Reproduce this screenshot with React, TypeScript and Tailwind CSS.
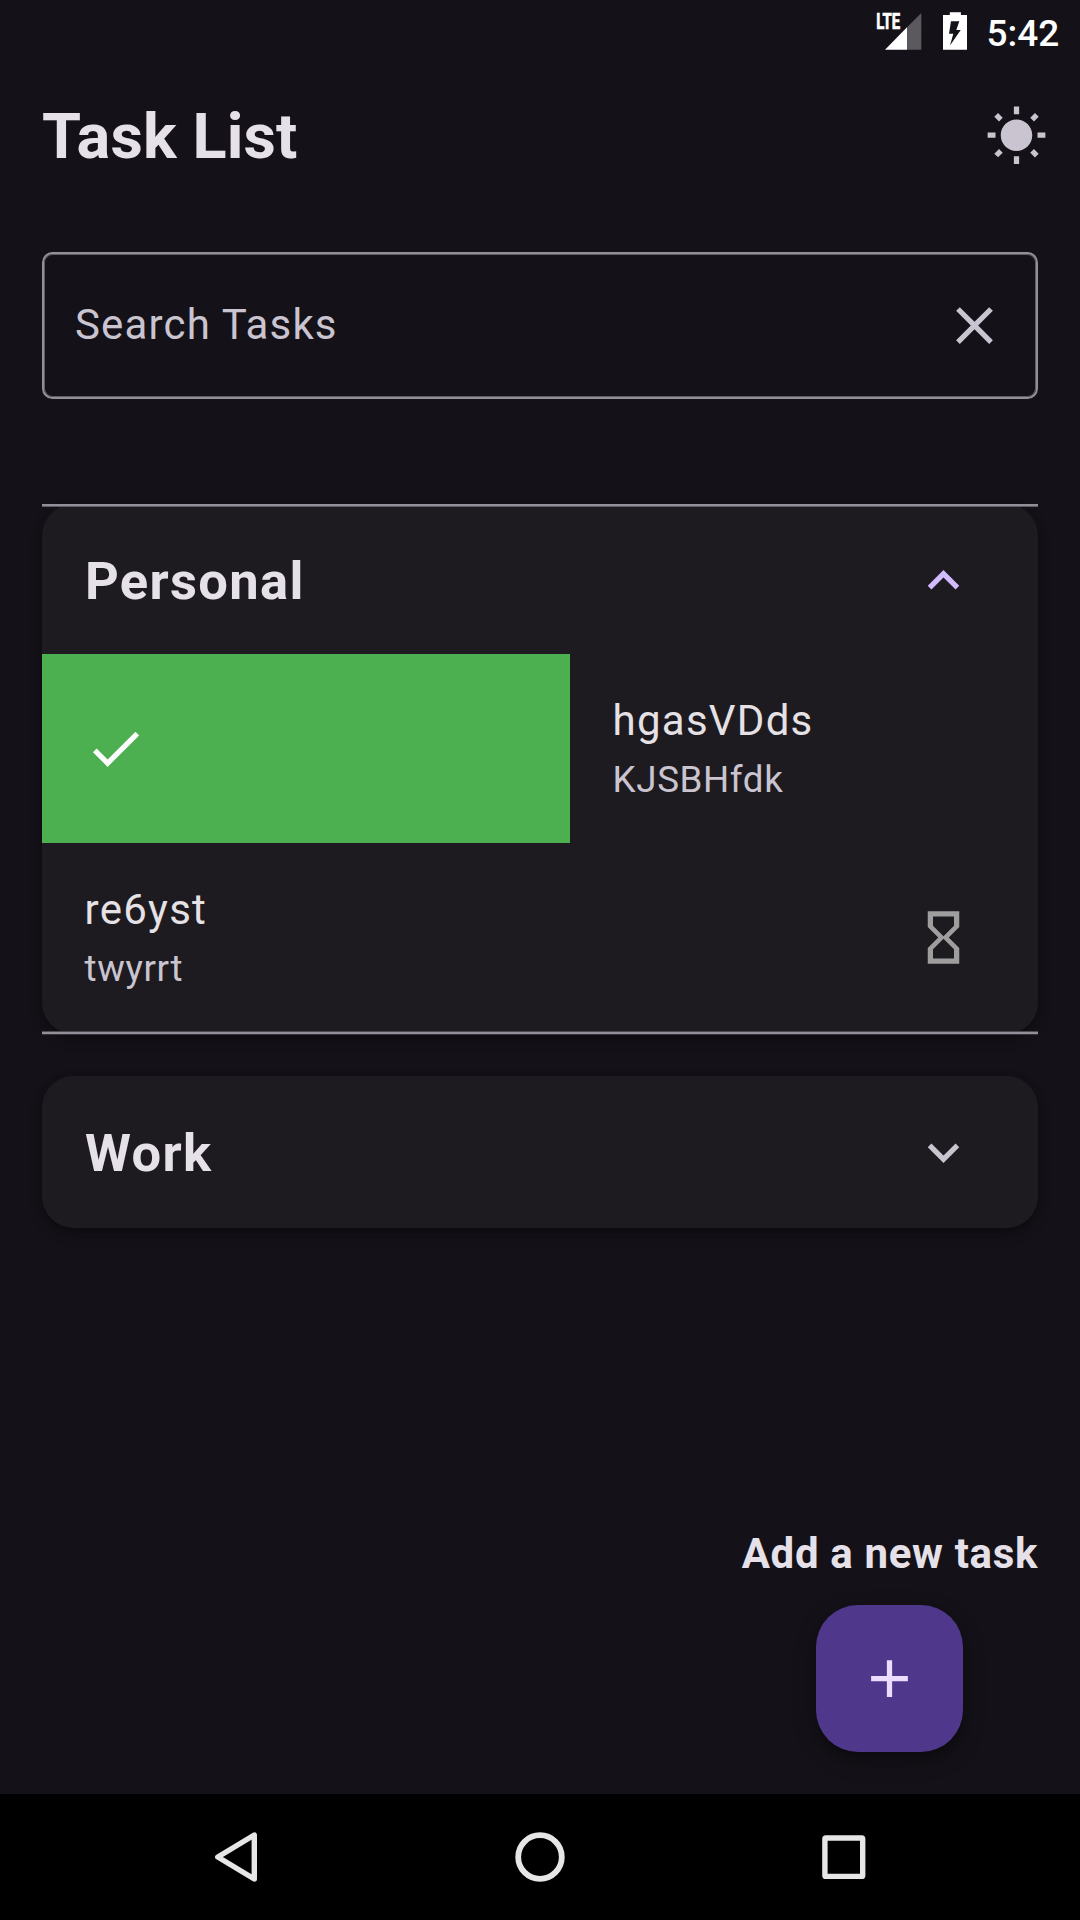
import type { ReactNode } from "react";

const paths = {
  sun: "M6.76 4.84l-1.8-1.79-1.41 1.41 1.79 1.79 1.42-1.41zM4 10.5H1v2h3v-2zm9-9.95h-2V3.5h2V.55zm7.45 3.91l-1.41-1.41-1.79 1.79 1.41 1.41 1.79-1.79zm-3.21 13.7l1.79 1.8 1.41-1.41-1.8-1.79-1.4 1.4zM20 10.5v2h3v-2h-3zm-8-5c-3.31 0-6 2.69-6 6s2.69 6 6 6 6-2.69 6-6-2.69-6-6-6zm-1 16.95h2V19.5h-2v2.95zm-7.45-3.91l1.41 1.41 1.79-1.8-1.41-1.41-1.79 1.8z",
  close: "M19 6.41L17.59 5 12 10.59 6.41 5 5 6.41 10.59 12 5 17.59 6.41 19 12 13.41 17.59 19 19 17.59 13.41 12z",
  less: "M12 8l-6 6 1.41 1.41L12 10.83l4.59 4.58L18 14z",
  more: "M16.59 8.59L12 13.17 7.41 8.59 6 10l6 6 6-6z",
  check: "M9 16.17L4.83 12l-1.42 1.41L9 19 21 7l-1.41-1.41z",
  hourglass: "M6 2v6h.01L6 8.01 10 12l-4 4 .01.01H6V22h12v-5.99h-.01L18 16l-4-4 4-3.99-.01-.01H18V2H6zm10 14.5V20H8v-3.5l4-4 4 4zm-4-5l-4-4V4h8v3.5l-4 4z",
  add: "M19 13h-6v6h-2v-6H5v-2h6V5h2v6h6v2z",
};

function Icon({ name, className }: { name: keyof typeof paths; className: string }) {
  return (
    <svg viewBox="0 0 24 24" fill="currentColor" className={`size-[63px] shrink-0 ${className}`}>
      <path d={paths[name]} />
    </svg>
  );
}

function StatusBar() {
  return (
    <div className="flex h-[63px] justify-end pr-[21px]">
      <svg viewBox="0 0 96 63" className="h-[63px] w-24">
        <text x="1.2" y="29" fill="#fff" stroke="#fff" strokeWidth="0.7" fontFamily="Roboto" fontWeight="700" fontSize="21.5" textLength="24" lengthAdjust="spacingAndGlyphs">
          LTE
        </text>
        <path d="M10 49.7L32 27.3V49.7z" fill="#fff" />
        <path d="M32 27.3L46.3 13V49.7H32z" fill="#5b595e" />
        <path
          fillRule="evenodd"
          fill="#fff"
          d="M68 15H74.8V12.3H85.9V15H92V49.8H68zM76 21.3L74 33.7H78.3L75 45.6L85.7 30H81.3L84.3 21.3z"
        />
      </svg>
      <span className="ml-[15.5px] w-[72.5px] text-[37px] leading-[68px] font-medium whitespace-nowrap text-white">5:42</span>
    </div>
  );
}

function TaskText({ title, note }: { title: string; note: string }) {
  return (
    <div className="pt-[35.5px] pl-[42.6px]">
      <p className="text-[42px] leading-[63px] tracking-[1.25px] text-[#e6e1e5]">{title}</p>
      <p className="mt-[2px] text-[36.75px] leading-[52.5px] tracking-[0.6px] text-[#cac4d0]">{note}</p>
    </div>
  );
}

function GroupHeader({ children, icon }: { children: ReactNode; icon: ReactNode }) {
  return (
    <div className="flex h-[147px] items-center justify-between pr-[63px] pl-[43px]">
      <h2 className="pt-[2px] text-[52.5px] leading-[63px] font-bold tracking-[1.3125px]">{children}</h2>
      {icon}
    </div>
  );
}

export default function App() {
  return (
    <div className="flex h-[1920px] w-[1080px] flex-col overflow-hidden bg-[#141218] font-['Roboto',sans-serif] text-[#e6e1e9]">
      <StatusBar />
      <header className="flex h-[147px] items-center justify-between pr-[32px] pl-[42px]">
        <h1 className="text-[63px] leading-[80px] font-bold tracking-[0.13px]">Task List</h1>
        <Icon name="sun" className="text-[#cac4d0]" />
      </header>

      <main className="flex flex-1 flex-col px-[42px] pt-[42px]">
        <div className="flex h-[147px] items-center justify-between rounded-[10.5px] border-2 border-[#938f99] pr-[30px] pl-[31px] shadow-[inset_0_0_0_1px_rgba(147,143,153,0.6)]">
          <span className="pb-[2px] text-[42px] leading-[61px] tracking-[1.15px] text-[#cac4d0]">Search Tasks</span>
          <Icon name="close" className="text-[#cac4d0]" />
        </div>

        <section className="relative mt-[105px] h-[531px]">
          <div className="h-[530.25px] rounded-[31.5px] bg-[#1d1b20] pt-[2.6px] shadow-[0_3px_6px_rgba(0,0,0,0.25),0_6px_14px_rgba(0,0,0,0.2)]">
            <GroupHeader icon={<Icon name="less" className="text-[#d0bcff]" />}>Personal</GroupHeader>
            <div className="flex h-[189px]">
              <div className="flex w-[528px] items-center bg-[#4caf50] pl-[42px]">
                <Icon name="check" className="text-white" />
              </div>
              <TaskText title="hgasVDds" note="KJSBHfdk" />
            </div>
            <div className="flex h-[189px] items-center justify-between pr-[63px]">
              <div className="h-full">
                <TaskText title="re6yst" note="twyrrt" />
              </div>
              <Icon name="hourglass" className="text-[#9e9e9e]" />
            </div>
          </div>
          <div className="absolute inset-x-0 top-0 h-[3px] border-b border-[#605d65] bg-[#938f99]" />
          <div className="absolute inset-x-0 top-[527px] h-[4px] border-t border-b border-t-[#4c4a50] border-b-[#34323a] bg-[#938f99]" />
        </section>

        <section className="mt-[41px] h-[152px] rounded-[31.5px] bg-[#1d1b20] pt-[2.6px] shadow-[0_3px_6px_rgba(0,0,0,0.25),0_6px_14px_rgba(0,0,0,0.2)]">
          <GroupHeader icon={<Icon name="more" className="text-[#cac4d0]" />}>Work</GroupHeader>
        </section>

        <div className="mt-auto mb-[42px] flex flex-col items-center self-end">
          <span className="mb-[20px] text-[42px] leading-[63px] font-bold tracking-[0.656px]">Add a new task</span>
          <button className="flex size-[147px] items-center justify-center rounded-[42px] bg-[#4f378b] shadow-[0_6px_10px_rgba(0,0,0,0.28),0_8px_24px_rgba(0,0,0,0.2)]">
            <Icon name="add" className="text-[#eaddff]" />
          </button>
        </div>
      </main>

      <nav className="h-[126px] bg-black">
        <svg viewBox="0 0 1080 126" className="h-[126px] w-[1080px]" fill="none" stroke="#e6e6e6" strokeWidth="5.4" strokeLinejoin="round">
          <path d="M254.3 41V85L217.8 63z" />
          <circle cx="540" cy="63" r="21.8" strokeWidth="5.8" />
          <rect x="824.9" y="44" width="37.8" height="38.4" rx="1" />
        </svg>
      </nav>
    </div>
  );
}
